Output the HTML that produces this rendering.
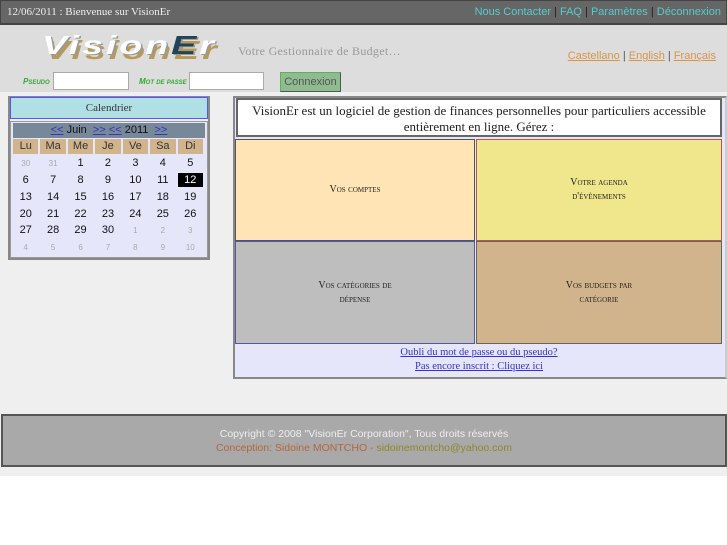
<!DOCTYPE html>
<html><head><meta charset="utf-8"><style>
*{box-sizing:border-box;margin:0;padding:0}
body{width:727px;height:545px;background:#fff;font-family:"Liberation Sans",sans-serif;position:relative;overflow:hidden}
.abs{position:absolute}
#top{left:0;top:0;width:727px;height:25px;background:#666;border:1px solid #444;border-bottom:2px solid #444}
#hdr{left:0;top:25px;width:727px;height:67px;background:#ddd}
#main{left:0;top:92px;width:727px;height:384px;background:#efefef}
.sc{font-variant:small-caps;font-family:"Liberation Serif",serif;font-size:10px;color:#222;text-align:center;line-height:14px}
.cell{position:absolute;display:flex;align-items:center;justify-content:center}
table.cal{border-collapse:separate;border-spacing:2px;width:194px;font-size:11px;position:absolute;left:11px;top:137px;table-layout:fixed}
table.cal td{text-align:center;height:14.8px;color:#111}
table.cal td.h{background:#d2b48c;color:#333}
table.cal td.o{color:#aaa;font-size:8px}
a{color:#33c;text-decoration:underline}
.nu{text-decoration:none}
</style></head><body>
<div id="top" class="abs">
<div class="abs" style="left:6px;top:5px;font-family:'Liberation Serif',serif;font-size:11px;color:#eee">12/06/2011 : Bienvenue sur VisionEr</div>
<div class="abs" style="right:5px;top:5px;font-size:11px;color:#5cc;white-space:nowrap">Nous Contacter <span style="color:#222">|</span> FAQ <span style="color:#222">|</span> Paramètres <span style="color:#222">|</span> Déconnexion</div>
</div>
<div id="hdr" class="abs">
<div class="abs" style="left:42px;top:5px;font-family:'Liberation Sans',sans-serif;font-style:italic;font-weight:bold;font-size:26px;letter-spacing:2px;color:#fff;text-shadow:1px 1px 0 #999,2px 5px 0 #b59a5a;transform:scaleX(1.45);transform-origin:left top">Vision<span style="color:#245">E</span>r</div>
<div class="abs" style="left:238px;top:19px;font-family:'Liberation Serif',serif;font-size:12px;color:#999;letter-spacing:.3px">Votre Gestionnaire de Budget…</div>
<div class="abs" style="right:11px;top:25px;font-size:11px;color:#555"><a style="color:#d9944c">Castellano</a> | <a style="color:#d9944c">English</a> | <a style="color:#d9944c">Français</a></div>
<div class="abs" style="left:23px;top:52px;font-size:8px;font-style:italic;font-weight:bold;color:#3a3;font-variant:small-caps">Pseudo</div>
<div class="abs" style="left:53px;top:47px;width:76px;height:18px;background:#fff;border:1px solid #aaa"></div>
<div class="abs" style="left:139px;top:52px;font-size:8px;font-style:italic;font-weight:bold;color:#3a3;font-variant:small-caps">Mot de passe</div>
<div class="abs" style="left:189px;top:47px;width:75px;height:18px;background:#fff;border:1px solid #aaa"></div>
<div class="abs" style="left:280px;top:47px;width:61px;height:20px;background:#8fbc8f;border:1px solid #6a6;border-right-color:#555;border-bottom-color:#555;font-size:11px;color:#555;text-align:center;line-height:18px">Connexion</div>
</div>
<div id="main" class="abs"></div>
<div class="abs" style="left:8px;top:96px;width:202px;height:164px;border:2px solid #888;background:#efefef"></div>
<div class="abs" style="left:10px;top:97px;width:198px;height:22px;background:#b0e0e6;border:1px solid #55f;font-family:'Liberation Serif',serif;font-size:11px;text-align:center;line-height:20px;color:#333">Calendrier</div>
<div class="abs" style="left:10px;top:121px;width:198px;height:137px;background:#e6e6fa;border:1px solid #999"></div>
<div class="abs" style="left:13px;top:123px;width:192px;height:15px;background:#778899;font-size:11px;text-align:center;line-height:15px;color:#111"><a>&lt;&lt;</a> Juin &nbsp;<a>&gt;&gt;</a> <a>&lt;&lt;</a> 2011 &nbsp;<a>&gt;&gt;</a></div>
<table class="cal">
<tr><td class="h">Lu</td><td class="h">Ma</td><td class="h">Me</td><td class="h">Je</td><td class="h">Ve</td><td class="h">Sa</td><td class="h">Di</td></tr>
<tr><td class="o">30</td><td class="o">31</td><td>1</td><td>2</td><td>3</td><td>4</td><td>5</td></tr>
<tr><td>6</td><td>7</td><td>8</td><td>9</td><td>10</td><td>11</td><td style="background:#000;color:#fff">12</td></tr>
<tr><td>13</td><td>14</td><td>15</td><td>16</td><td>17</td><td>18</td><td>19</td></tr>
<tr><td>20</td><td>21</td><td>22</td><td>23</td><td>24</td><td>25</td><td>26</td></tr>
<tr><td>27</td><td>28</td><td>29</td><td>30</td><td class="o">1</td><td class="o">2</td><td class="o">3</td></tr>
<tr><td class="o">4</td><td class="o">5</td><td class="o">6</td><td class="o">7</td><td class="o">8</td><td class="o">9</td><td class="o">10</td></tr>
</table>
<div class="abs" style="left:233px;top:96px;width:494px;height:283px;border:2px solid #888;border-right-color:#ccc;background:#e6e6fa"></div>
<div class="abs" style="left:236px;top:98px;width:486px;height:39px;background:#fff;border:2px solid #666;font-family:'Liberation Serif',serif;font-size:13px;text-align:center;line-height:16px;padding-top:3px;color:#222">VisionEr est un logiciel de gestion de finances personnelles pour particuliers accessible entièrement en ligne. Gérez :</div>
<div class="cell sc" style="left:235px;top:139px;width:240px;height:102px;background:#ffe4b5;border:1px solid #555">Vos comptes</div>
<div class="cell sc" style="left:476px;top:139px;width:246px;height:102px;background:#f0e68c;border:1px solid #b55">Votre agenda<br>d'évènements</div>
<div class="cell sc" style="left:235px;top:241px;width:240px;height:103px;background:#bebebe;border:1px solid #55a">Vos catégories de<br>dépense</div>
<div class="cell sc" style="left:476px;top:241px;width:246px;height:103px;background:#d2b48c;border:1px solid #665">Vos budgets par<br>catégorie</div>
<div class="abs" style="left:236px;top:346px;width:486px;font-family:'Liberation Serif',serif;font-size:10.5px;text-align:center;line-height:14px"><a>Oubli du mot de passe ou du pseudo?</a><br><a>Pas encore inscrit : Cliquez ici</a></div>
<div class="abs" style="left:1px;top:414px;width:726px;height:53px;background:#a9a9a9;border:2px solid #555;font-size:10.5px;text-align:center;line-height:14px;padding-top:11px">
<span style="color:#eee">Copyright © 2008 "VisionEr Corporation", Tous droits réservés</span><br>
<span style="color:#b5653f">Conception: Sidoine MONTCHO - </span><span style="color:#8a8a2a">sidoinemontcho@yahoo.com</span></div>
</body></html>
